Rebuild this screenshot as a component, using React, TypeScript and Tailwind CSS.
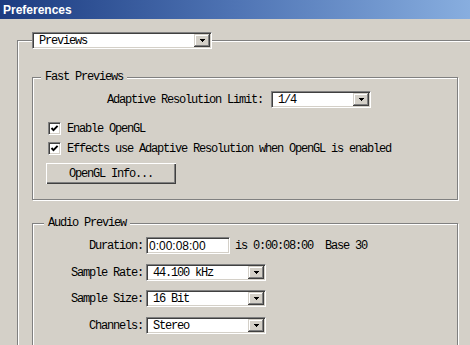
import React from "react";

const FONT = "font-['Liberation_Mono',monospace] text-[12px] tracking-[-1.2px] leading-[12px] text-black";

const sunken =
  "border border-t-[#808080] border-l-[#808080] border-b-white border-r-white shadow-[inset_1px_1px_0_#404040,inset_-1px_-1px_0_#d4d0c8]";

function Arrow() {
  return (
    <svg width="5" height="3" viewBox="0 0 5 3" shapeRendering="crispEdges">
      <polygon points="0,0 5,0 2.5,3" fill="#000" />
    </svg>
  );
}

function Dropdown({ value, className }: { value: string; className: string }) {
  return (
    <div className={`flex h-[17px] items-stretch bg-white p-[1px] ${sunken} ${className}`}>
      <span className={`flex flex-1 items-center pl-[5px] ${FONT}`}>{value}</span>
      <span className="flex w-[16px] items-center justify-center bg-[#d4d0c8] shadow-[inset_-1px_-1px_0_#404040,inset_1px_1px_0_#d4d0c8,inset_-2px_-2px_0_#808080,inset_2px_2px_0_#fff]">
        <Arrow />
      </span>
    </div>
  );
}

function Checkbox({ label }: { label: string }) {
  return (
    <div className="flex h-[13px] items-center">
      <div className={`ml-[7px] flex h-[13px] w-[13px] items-center justify-center bg-white ${sunken}`}>
        <svg width="9" height="9" viewBox="0 0 9 9">
          <polyline points="1.5,4 3.5,6.2 7.6,1.8" fill="none" stroke="#000" strokeWidth="1.9" />
        </svg>
      </div>
      <span className={`ml-[6px] whitespace-pre ${FONT}`}>{label}</span>
    </div>
  );
}

const etched =
  "border border-[#808080] shadow-[1px_1px_0_#fff,inset_1px_1px_0_#fff]";

function AudioRow({ label, children, mt }: { label: string; children: React.ReactNode; mt: string }) {
  return (
    <div className={`flex h-[17px] items-center ${mt}`}>
      <span className={`w-[99px] text-right whitespace-pre ${FONT}`}>{label}</span>
      <div className="ml-[3px] flex items-center">{children}</div>
    </div>
  );
}

export default function App() {
  return (
    <div className="h-[345px] w-[470px] overflow-hidden bg-[#d4d0c8]">
      {/* title bar */}
      <div className="flex h-[19px] items-center bg-gradient-to-r from-[#1c3b80] via-[#4f74b4] to-[#88aedf] pl-[3px]">
        <span className="font-['Liberation_Sans',sans-serif] text-[12px] font-bold text-white">Preferences</span>
      </div>

      <fieldset className={`ml-[17px] mt-[13px] w-[480px] pl-[14px] ${etched}`}>
        <legend>
          <Dropdown value="Previews" className="w-[180px]" />
        </legend>

        {/* Fast Previews */}
        <fieldset className={`mt-[22px] w-[426px] pl-[8px] pb-[15px] ${etched}`}>
          <legend className={`bg-[#d4d0c8] px-[4px] ${FONT}`}>Fast Previews</legend>
          <div className="mt-[8px] flex h-[17px] items-center">
            <span className={`w-[222px] text-right whitespace-pre ${FONT}`}>Adaptive Resolution Limit:</span>
            <Dropdown value="1/4" className="ml-[8px] w-[100px]" />
          </div>
          <div className="mt-[14px]">
            <Checkbox label="Enable OpenGL" />
          </div>
          <div className="mt-[7px]">
            <Checkbox label="Effects use Adaptive Resolution when OpenGL is enabled" />
          </div>
          <button className={`ml-[5px] mt-[8px] flex h-[21px] w-[130px] items-center justify-center bg-[#d4d0c8] shadow-[inset_1px_1px_0_#fff,inset_-1px_-1px_0_#404040,inset_-2px_-2px_0_#808080] ${FONT}`}>
            OpenGL Info...
          </button>
        </fieldset>

        {/* Audio Preview */}
        <fieldset className={`mt-[17px] w-[426px] pl-[11px] pb-[20px] ${etched}`}>
          <legend className={`bg-[#d4d0c8] px-[4px] ${FONT}`}>Audio Preview</legend>
          <AudioRow label="Duration:" mt="mt-[8px]">
            <div className={`flex h-[17px] w-[84px] items-center bg-white p-[1px] pl-[2px] ${sunken}`}>
              <span className="font-['Liberation_Sans',sans-serif] text-[12px] leading-[12px] text-black">0:00:08:00</span>
            </div>
            <span className={`ml-[5px] whitespace-pre ${FONT}`}>is 0:00:08:00  Base 30</span>
          </AudioRow>
          <AudioRow label="Sample Rate:" mt="mt-[10px]">
            <Dropdown value="44.100 kHz" className="w-[120px]" />
          </AudioRow>
          <AudioRow label="Sample Size:" mt="mt-[9px]">
            <Dropdown value="16 Bit" className="w-[120px]" />
          </AudioRow>
          <AudioRow label="Channels:" mt="mt-[10px]">
            <Dropdown value="Stereo" className="w-[120px]" />
          </AudioRow>
        </fieldset>
      </fieldset>
    </div>
  );
}
